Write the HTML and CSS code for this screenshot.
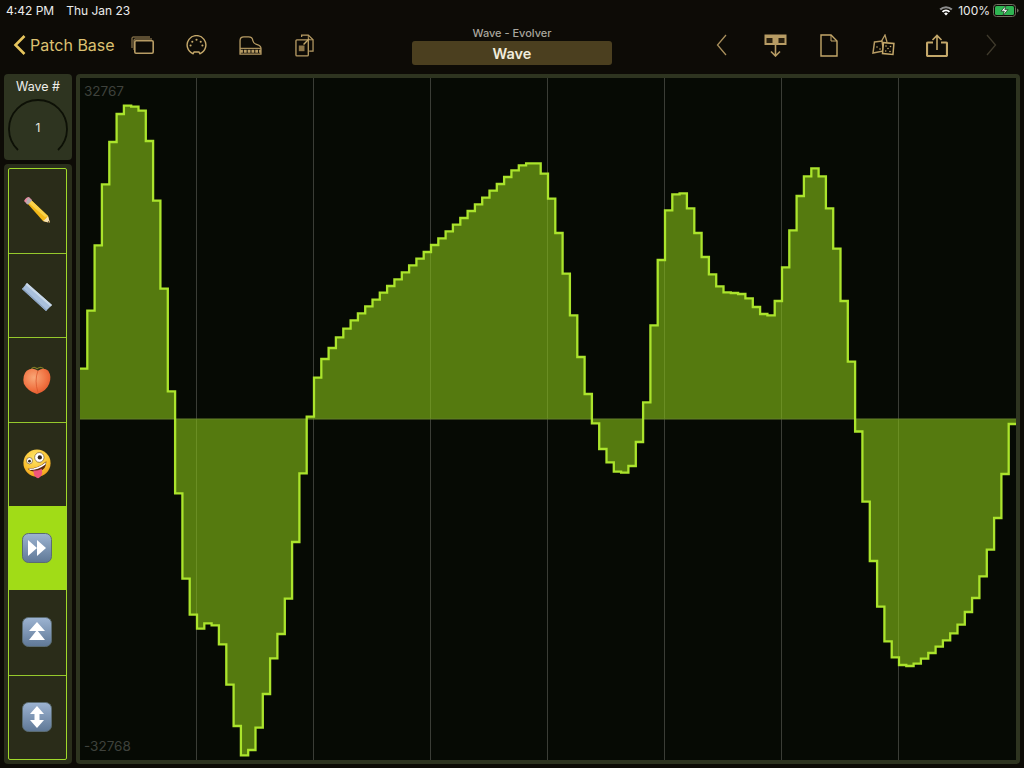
FILE: index.html
```html
<!DOCTYPE html>
<html lang="en">
<head>
  <meta charset="UTF-8" />
  <title>Wave - Evolver</title>
  <link rel="stylesheet" href="styles.css">
</head>
<body>

 <div class="status-bar">
  <div class="status-left">
    <span>4:42 PM</span>
    <span>Thu Jan 23</span>
  </div>
  <div class="status-right">
    <svg class="wifi" width="14" height="11" viewBox="0 0 16 12">
      <path d="M0.5 4 A11 11 0 0 1 15.5 4 L13.8 5.8 A8.6 8.6 0 0 0 2.2 5.8 Z" fill="#8d8d8d"/>
      <path d="M3.2 6.8 A7 7 0 0 1 12.8 6.8 L11.2 8.4 A4.7 4.7 0 0 0 4.8 8.4 Z" fill="#fff"/>
      <path d="M5.8 9.4 A3.2 3.2 0 0 1 10.2 9.4 L8 11.6 Z" fill="#fff"/>
    </svg>
    <span class="battery-text">100%</span>
    <svg width="26" height="13" viewBox="0 0 26 13">
      <rect x="0.5" y="0.5" width="22" height="12" rx="3" fill="none" stroke="#6f6f5f"/>
      <rect x="2" y="2" width="19" height="9" rx="1.5" fill="#2fb552"/>
      <path d="M24 4.5 q1.6 .6 1.6 2 t-1.6 2 Z" fill="#6f6f5f"/>
      <path d="M13 1.5 L8 7.2 H11.3 L10 11.5 L15 5.6 H11.8 Z" fill="#fff" stroke="#0d0b06" stroke-width=".6"/>
    </svg>
  </div>
 </div>

 <div class="nav-bar">
  <div class="nav-left">
    <a class="back">
      <svg width="13" height="22" viewBox="0 0 13 22"><path d="M11.5 2 L2.5 11 L11.5 20" fill="none" stroke="#e6c55d" stroke-width="2.6"/></svg>
      <span>Patch Base</span>
    </a>
    <svg class="icon first" width="23" height="18" viewBox="0 0 23 18">
      <path d="M1 12 V2 Q1 1 2 1 H19 M3 14 V4 Q3 3 4 3 H21" fill="none" stroke="#a98f5c" stroke-width="1"/>
      <rect x="3.8" y="4.8" width="18.4" height="12.4" rx="1.2" fill="#0d0b06" stroke="#b79c64" stroke-width="1.6"/>
    </svg>
    <svg class="icon midi" width="21" height="21" viewBox="0 0 22 22">
      <path d="M7.5 19.6 A9.8 9.8 0 1 1 14.5 19.6 L13.5 17.8 H8.5 Z" fill="none" stroke="#c4a86a" stroke-width="1.5"/>
      <g fill="#c4a86a"><circle cx="11" cy="5" r="1.1"/><circle cx="6.6" cy="7" r="1.1"/><circle cx="15.4" cy="7" r="1.1"/><circle cx="4.8" cy="11" r="1.1"/><circle cx="17.2" cy="11" r="1.1"/></g>
    </svg>
    <svg class="icon piano" width="23" height="19" viewBox="0 0 24 20">
      <path d="M1 19 V5 Q1 1 5 1 H10 Q14 1 14.5 5 Q15 8 19 9 Q23 10 23 13 V19 Z" fill="none" stroke="#b79c64" stroke-width="1.4"/>
      <path d="M1 13 H23" stroke="#b79c64" stroke-width="1.2"/>
      <path d="M1 16 H23" stroke="#b79c64" stroke-width="3" stroke-dasharray="3 1"/>
    </svg>
    <svg class="icon docs" width="19" height="23" viewBox="0 0 20 24">
      <path d="M7 3 V1 H14 L19 6 V18 H15" fill="none" stroke="#b79c64" stroke-width="1.3"/>
      <path d="M14 1 V6 H19" fill="none" stroke="#b79c64"/>
      <rect x="1" y="6" width="13" height="17" rx="1" fill="#0d0b06" stroke="#b79c64" stroke-width="1.4"/>
      <rect x="4" y="12" width="6" height="6" fill="#8d7648"/>
      <path d="M9 11 L15 5" stroke="#c4a86a" stroke-width="1.5"/>
    </svg>
  </div>

  <div class="nav-title">
    <div class="nav-subtitle">Wave - Evolver</div>
    <div class="nav-patch">Wave</div>
  </div>

  <div class="nav-right">
    <svg width="11" height="22" viewBox="0 0 11 22"><path d="M10 1 L1.5 11 L10 21" fill="none" stroke="#a98f5c" stroke-width="1.3"/></svg>
    <svg class="r-bar" width="23" height="23" viewBox="0 0 23 23">
      <rect x="0.5" y="0.5" width="22" height="10.5" fill="#b79c64"/>
      <rect x="2.5" y="4" width="18" height="5" fill="#2a2110"/>
      <rect x="8.5" y="4" width="6" height="7" fill="#b79c64"/>
      <path d="M11.5 10 V21.5 M7 17.5 L11.5 22 L16 17.5" fill="none" stroke="#b79c64" stroke-width="1.6"/>
    </svg>
    <svg class="r-doc" width="18" height="23" viewBox="0 0 18 23">
      <path d="M1 1 H11 L17 7 V22 H1 Z" fill="none" stroke="#c4a86a" stroke-width="1.4"/>
      <path d="M11 1 V7 H17" fill="none" stroke="#c4a86a"/>
    </svg>
    <svg class="r-dice" width="23" height="23" viewBox="0 0 23 23">
      <path d="M9 8 L13 1 L15 8" fill="none" stroke="#b79c64" stroke-width="1.3"/>
      <path d="M2.5 9 L10 8 L11.5 18 L1 20 Z" fill="#0d0b06" stroke="#b79c64" stroke-width="1.5" transform="translate(0 -1)"/>
      <rect x="11" y="9" width="10.5" height="11" fill="#0d0b06" stroke="#c4a86a" stroke-width="1.5" transform="rotate(5 16 14)"/>
      <g fill="#c4a86a"><circle cx="14" cy="12" r=".8"/><circle cx="18.5" cy="12.5" r=".8"/><circle cx="16" cy="14.5" r=".8"/><circle cx="13.7" cy="17" r=".8"/><circle cx="18" cy="17.5" r=".8"/><circle cx="5" cy="13" r=".8"/><circle cx="8" cy="15" r=".8"/></g>
    </svg>
    <svg class="r-share" width="22" height="23" viewBox="0 0 22 23">
      <path d="M7 8.5 H2 Q1 8.5 1 9.5 V21 Q1 22 2 22 H20 Q21 22 21 21 V9.5 Q21 8.5 20 8.5 H15" fill="none" stroke="#c4a86a" stroke-width="2.2"/>
      <path d="M11 16 V2 M6.5 6 L11 1.5 L15.5 6" fill="none" stroke="#c4a86a" stroke-width="1.6"/>
    </svg>
    <svg class="r-next" width="11" height="22" viewBox="0 0 11 22"><path d="M1 1 L9.5 11 L1 21" fill="none" stroke="#3f3a2c" stroke-width="1.3"/></svg>
  </div>
 </div>

 <div class="main">
  <div class="side">
    <div class="knob-box">
      <div class="knob-label">Wave #</div>
      <div class="knob">
        <svg width="60" height="56" viewBox="0 0 60 56">
          <path d="M10 52 A29 29 0 1 1 50 52" fill="none" stroke="#0d1006" stroke-width="1.8"/>
        </svg>
        <span class="knob-value">1</span>
      </div>
    </div>

    <div class="tool-box">
      <div class="tool-list">
        <div class="tool">
          <svg width="32" height="32" viewBox="0 0 32 32">
            <path d="M6 8 L9 4 L27 21 L29 28 L22 26 Z" fill="#f3b818"/>
            <path d="M9 4 L27 21 L24 22 L6.5 7 Z" fill="#f9d24a"/>
            <path d="M22 26 L29 28 L27 21 Q25 24 22 26 Z" fill="#f7e2b5"/>
            <path d="M27.5 26 L29 28 L26.5 27.5 Z" fill="#3a2c20"/>
            <path d="M3 6 Q5 2 8 2 L11 5 L6.5 9.5 Z" fill="#e88aa0"/>
            <path d="M7 2.5 L11 5.5 L7 9.5 L5 8 Z" fill="#b4aeb0"/>
          </svg>
        </div>
        <div class="tool">
          <svg width="32" height="32" viewBox="0 0 32 32">
            <path d="M6 3 L31 25 L25 31 L1 9 Z" fill="#a9c0dc"/>
            <path d="M6 3 L31 25 L29.5 26.5 L4.5 4.5 Z" fill="#c9d8e8"/>
            <path d="M1 9 L25 31 L26 30 L2 8 Z" fill="#8ea6c4"/>
          </svg>
        </div>
        <div class="tool">
          <svg width="30" height="30" viewBox="0 0 32 32">
            <defs>
              <radialGradient id="peach" cx=".4" cy=".35" r=".8">
                <stop offset="0" stop-color="#f9a878"/>
                <stop offset=".6" stop-color="#f0703f"/>
                <stop offset="1" stop-color="#d94c24"/>
              </radialGradient>
            </defs>
            <path d="M10 4 Q13 1 16 4 Q20 1 23 4" fill="none" stroke="#7d7a24" stroke-width="1.2"/>
            <path d="M16 31 Q6 28 2 20 Q0 11 5 6 Q11 2 17 6 Q23 2 28 6 Q32 12 29 20 Q26 28 16 31 Z" fill="url(#peach)"/>
            <path d="M17 6 Q13 17 17 29" fill="none" stroke="#d9562c" stroke-width=".8"/>
          </svg>
        </div>
        <div class="tool">
          <svg width="30" height="30" viewBox="0 0 32 32">
            <defs>
              <radialGradient id="face" cx=".45" cy=".3" r=".8">
                <stop offset="0" stop-color="#ffe96b"/>
                <stop offset=".65" stop-color="#f9bd2c"/>
                <stop offset="1" stop-color="#ec8d17"/>
              </radialGradient>
            </defs>
            <circle cx="16" cy="15" r="14.5" fill="url(#face)"/>
            <ellipse cx="18.5" cy="9" rx="5" ry="5.2" fill="#fff" stroke="#5a3a10" stroke-width=".6"/>
            <circle cx="19" cy="9" r="2.3" fill="#33251a"/>
            <ellipse cx="8" cy="12.5" rx="3.2" ry="3.4" fill="#fff" stroke="#5a3a10" stroke-width=".6"/>
            <circle cx="8" cy="13" r="1.5" fill="#33251a"/>
            <path d="M6 21 Q17 21 26 13 Q26 22 18 24 Q10 25 6 21 Z" fill="#5b2a10"/>
            <path d="M7 21 Q17 21 25.5 14 L25 16.5 Q17 22.5 8.5 22.5 Z" fill="#fff"/>
            <path d="M12 23 Q18 23 21 21 Q23 28 18 31 Q13 32 12 23 Z" fill="#f0567c"/>
          </svg>
        </div>
        <div class="tool active">
          <svg width="30" height="30" viewBox="0 0 30 30">
            <use href="#key-bg"/>
            <path d="M6 7 L15 15 L6 23 Z M15 7 L24 15 L15 23 Z" fill="#fff"/>
          </svg>
        </div>
        <div class="tool">
          <svg width="30" height="30" viewBox="0 0 30 30">
            <use href="#key-bg"/>
            <path d="M15 5 L23 14 H7 Z M15 13 L23 23 H7 Z" fill="#fff"/>
          </svg>
        </div>
        <div class="tool">
          <svg width="30" height="30" viewBox="0 0 30 30">
            <use href="#key-bg"/>
            <path d="M15 4 L22 12 H17.5 V18 H22 L15 26 L8 18 H12.5 V12 H8 Z" fill="#fff"/>
          </svg>
        </div>
      </div>
    </div>
  </div>

  <div class="chart-box">
    <div class="chart">
      <svg id="wave" width="936" height="682" viewBox="0 0 936 682"></svg>
      <span class="chart-label top">32767</span>
      <span class="chart-label bottom">-32768</span>
    </div>
  </div>
 </div>

 <svg class="defs" width="0" height="0">
  <defs>
    <linearGradient id="key-fill" x1="0" y1="0" x2="0" y2="1">
      <stop offset="0" stop-color="#9db4d2"/>
      <stop offset="1" stop-color="#5f7896"/>
    </linearGradient>
    <rect id="key-bg" x="0.5" y="0.5" width="29" height="29" rx="6" fill="url(#key-fill)" stroke="#5b6c72"/>
  </defs>
 </svg>

<script src="wave.js"></script>
</body>
</html>
```

FILE: styles.css
```css
* {
  box-sizing: border-box;
}
html, body {
  margin: 0;
  height: 100%;
}
body {
  width: 1024px;
  height: 768px;
  overflow: hidden;
  background: #0d0b06;
  color: white;
  font-family: Inter, "Liberation Sans", sans-serif;
}

/* status bar */
.status-bar {
  height: 20px;
  padding: 1px 5px 0 6px;
  display: flex;
  justify-content: space-between;
  align-items: center;
  font-size: 12px;
  color: #ececec;
}
.status-left {
  display: flex;
  gap: 12px;
}
.status-right {
  display: flex;
  align-items: center;
  gap: 3px;
}
.battery-text {
  margin-left: 2px;
}
.defs {
  position: absolute;
}

/* nav */
.nav-bar {
  height: 54px;
  position: relative;
  display: flex;
  justify-content: space-between;
  align-items: center;
  padding: 0 27px 4px 13px;
}
.nav-left, .nav-right {
  display: flex;
  align-items: center;
}
.nav-left .first {
  margin-left: 16px;
}
.nav-left .midi {
  margin-left: 32px;
}
.nav-left .piano {
  margin-left: 32px;
}
.nav-left .docs {
  margin-left: 33px;
}
.r-bar {
  margin-left: 37px;
}
.r-doc {
  margin-left: 33px;
}
.r-dice {
  margin-left: 34px;
}
.r-share {
  margin-left: 31px;
}
.r-next {
  margin-left: 38px;
}
.back {
  display: flex;
  align-items: center;
  gap: 4px;
  color: #dcc171;
  font-size: 16px;
}
.nav-title {
  position: absolute;
  left: 412px;
  top: 6px;
  width: 200px;
  text-align: center;
}
.nav-subtitle {
  font-size: 11px;
  font-weight: 500;
  color: #a9a69d;
  height: 15px;
  line-height: 15px;
}
.nav-patch {
  height: 24px;
  line-height: 25px;
  border-radius: 3px;
  background: #4b3f1f;
  font-size: 14.5px;
  font-weight: 600;
  color: #f1ecdc;
}

/* main */
.main {
  display: flex;
  gap: 4px;
  padding: 0 4px 4px;
  height: 694px;
}
.side {
  width: 68px;
  display: flex;
  flex-direction: column;
  gap: 4px;
}
.knob-box {
  height: 86px;
  background: #2e3420;
  border-radius: 4px;
  text-align: center;
}
.knob-label {
  padding-top: 5px;
  font-size: 12.5px;
  color: #eeeeea;
  height: 24px;
}
.knob {
  position: relative;
  height: 56px;
}
.knob svg {
  display: block;
  margin: 0 auto;
}
.knob-value {
  position: absolute;
  left: 0;
  right: 0;
  top: 22px;
  font-size: 12px;
  color: #e8e8e0;
}
.tool-box {
  flex: 1;
  padding: 4px 5px 4px 4px;
  background: #2a2e1b;
  border-radius: 4px;
}
.tool-list {
  height: 592px;
  display: grid;
  grid-template-rows: 84px repeat(6, 1fr);
  border: 1px solid #a0d92a;
  border-radius: 2px;
  background: #2a2c19;
}
.tool {
  display: flex;
  align-items: center;
  justify-content: center;
  padding-right: 1px;
  border-top: 1px solid #96c92c;
}
.tool:first-child {
  border-top: 0;
}
.tool.active {
  background: #a1dc17;
  border-top: 0;
}
.tool.active + .tool {
  border-top: 0;
}

/* chart */
.chart-box {
  width: 944px;
  padding: 4px;
  background: #2e3420;
  border-radius: 4px;
}
.chart {
  position: relative;
  width: 936px;
  height: 682px;
  background: #060a04;
}
.chart svg {
  display: block;
}
.chart-label {
  position: absolute;
  left: 4px;
  font-size: 13.5px;
  color: #3f423c;
}
.chart-label.top {
  top: 5px;
}
.chart-label.bottom {
  bottom: 6px;
}
```

FILE: wave.js
```js
// campioni letti dal riferimento: y della linea in px pagina
const samples = [
  368.7, 310.7, 245.3, 184.3, 142, 114, 105.7, 106.7, 110.7, 141, 200.7, 288.7, 391.3,
  493.3, 578.7, 614.7, 628.7, 623.3, 625.3, 644.3, 684.7, 726, 755.3, 750, 727.7, 694,
  658.3, 634, 598.7, 542, 473.3, 416.7, 377.7, 359, 348, 337.3, 328.7, 320.3, 313.3,
  306.3, 299.7, 292.7, 286, 279.3, 272.3, 265.3, 258.7, 252, 245, 238.3, 231.3, 224.7,
  218, 211, 204.3, 197.7, 190.7, 184, 177, 170.3, 165.3, 163.3, 163.3, 173.7, 198.7,
  233, 273.7, 315.3, 357, 394, 423.3, 449, 462.3, 471.7, 472.7, 466, 442, 402.3, 325.3,
  260, 210.3, 194.3, 193.3, 208.3, 233, 257, 274.3, 286.3, 292.3, 293, 294, 298.3, 307,
  314, 315.3, 301, 267.3, 230.3, 196, 176.3, 168.3, 176.3, 208.3, 248.7, 301, 361.7,
  431.5, 501.7, 561, 606.7, 641.3, 657.3, 665, 666, 663.7, 658.7, 653, 646.7, 640.3,
  633.3, 624.7, 612, 598, 576.3, 549.7, 518, 474, 424
];

const TOP = 78;      // inizio grafico nella pagina
const ZERO = 341;    // y dello zero dentro il grafico
const STEP = 936 / 128;

const svg = document.getElementById('wave');

function el(name, attrs) {
  const node = document.createElementNS('http://www.w3.org/2000/svg', name);
  for (const key in attrs) node.setAttribute(key, attrs[key]);
  svg.appendChild(node);
}

// griglia verticale
for (let i = 1; i < 8; i++) {
  const x = i * 117 - 0.5;
  el('line', { x1: x, y1: 0, x2: x, y2: 682, stroke: '#3a3d36', 'stroke-width': 1 });
}

let d = '';
samples.forEach((y, i) => {
  const cmd = i === 0 ? 'M' : 'L';
  const left = (i * STEP).toFixed(1);
  const right = ((i + 1) * STEP).toFixed(1);
  const top = (y - TOP).toFixed(1);
  d += `${cmd}${left} ${top} L${right} ${top} `;
});

el('path', { d: `M0 ${ZERO} L${d.slice(1)} L936 ${ZERO} Z`, fill: 'rgba(139,197,24,0.6)', stroke: 'none' });
el('line', { x1: 0, y1: ZERO, x2: 936, y2: ZERO, stroke: '#64802a', 'stroke-width': 1 });
el('path', { d, fill: 'none', stroke: '#abe42c', 'stroke-width': 2.3 });
```
